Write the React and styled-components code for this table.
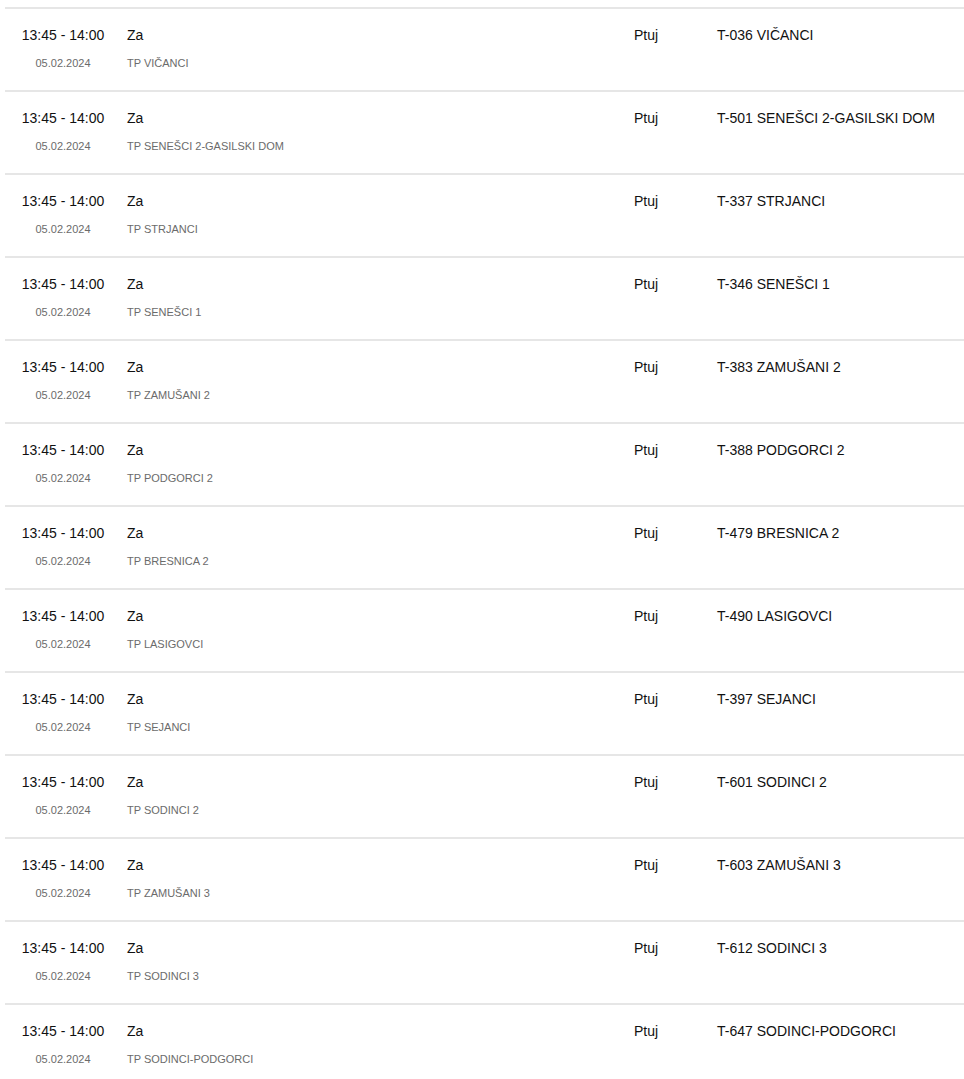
import React from 'react';
import styled, { createGlobalStyle } from 'styled-components';

const GlobalStyle = createGlobalStyle`
  html, body {
    margin: 0;
    padding: 0;
    background: #ffffff;
  }
  body {
    font-family: "Liberation Sans", Arial, sans-serif;
    color: #111111;
  }
`;

const List = styled.div`
  padding: 7px 0 0 5px;
  display: flex;
  flex-direction: column;
`;

const Row = styled.div`
  display: grid;
  grid-template-columns: 116px 507px 83px 1fr;
  border-top: 2px solid #e6e6e6;
  padding: 18px 0 20px;
  min-height: 43px;
`;

const Cell = styled.div`
  display: flex;
  flex-direction: column;
  gap: 14px;
  padding: 0 6px;
  align-items: ${p => (p.center ? 'center' : 'flex-start')};
  ${p => p.center && 'padding: 0 0 0 0;'}
`;

const Main = styled.span`
  font-size: 14px;
  line-height: 16px;
  color: #111111;
  white-space: nowrap;
`;

const Sub = styled.span`
  font-size: 11px;
  line-height: 13px;
  color: #6b6b6b;
  white-space: nowrap;
`;

const rows = [
  ['TP VIČANCI', 'T-036 VIČANCI'],
  ['TP SENEŠCI 2-GASILSKI DOM', 'T-501 SENEŠCI 2-GASILSKI DOM'],
  ['TP STRJANCI', 'T-337 STRJANCI'],
  ['TP SENEŠCI 1', 'T-346 SENEŠCI 1'],
  ['TP ZAMUŠANI 2', 'T-383 ZAMUŠANI 2'],
  ['TP PODGORCI 2', 'T-388 PODGORCI 2'],
  ['TP BRESNICA 2', 'T-479 BRESNICA 2'],
  ['TP LASIGOVCI', 'T-490 LASIGOVCI'],
  ['TP SEJANCI', 'T-397 SEJANCI'],
  ['TP SODINCI 2', 'T-601 SODINCI 2'],
  ['TP ZAMUŠANI 3', 'T-603 ZAMUŠANI 3'],
  ['TP SODINCI 3', 'T-612 SODINCI 3'],
  ['TP SODINCI-PODGORCI', 'T-647 SODINCI-PODGORCI'],
];

export default function App() {
  return (
    <>
      <GlobalStyle />
      <List>
        {rows.map(([tp, station]) => (
          <Row key={station}>
            <Cell center>
              <Main>13:45 - 14:00</Main>
              <Sub>05.02.2024</Sub>
            </Cell>
            <Cell>
              <Main>Za</Main>
              <Sub>{tp}</Sub>
            </Cell>
            <Cell>
              <Main>Ptuj</Main>
            </Cell>
            <Cell>
              <Main>{station}</Main>
            </Cell>
          </Row>
        ))}
      </List>
    </>
  );
}
